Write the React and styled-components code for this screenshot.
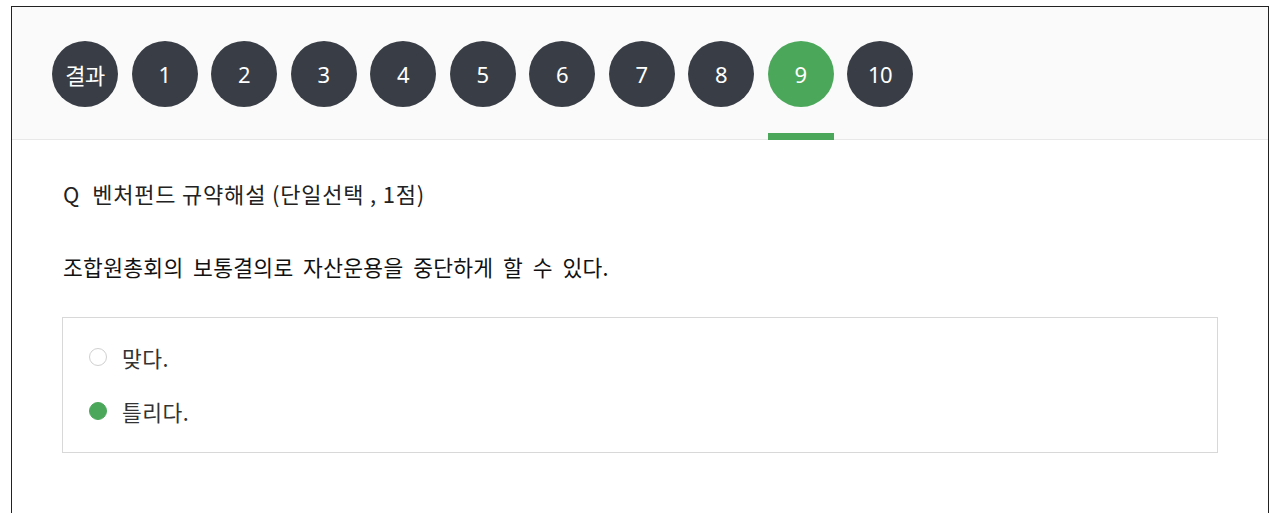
import React, { useState } from 'react';
import styled, { createGlobalStyle } from 'styled-components';

const GlobalStyle = createGlobalStyle`
  body {
    margin: 0;
    background: #fff;
    font-family: "Noto Sans CJK KR", "Noto Sans", sans-serif;
    color: #222;
  }
`

const tabs = ['결과', '1', '2', '3', '4', '5', '6', '7', '8', '9', '10'];

const options = ['맞다.', '틀리다.'];

const App = () => {
  const [current, setCurrent] = useState('9');
  const [answer, setAnswer] = useState(1);

  return (
    <>
      <GlobalStyle />
      <Frame>
        <TabBar>
          {tabs.map((tab) => (
            <TabItem key={tab} $active={tab === current} onClick={() => setCurrent(tab)}>
              <TabCircle $active={tab === current} $word={tab.length > 2}>{tab}</TabCircle>
            </TabItem>
          ))}
        </TabBar>

        <Content>
          <QuestionTitle>
            <span>Q</span>
            <span>벤처펀드 규약해설 (단일선택 , 1점)</span>
          </QuestionTitle>
          <QuestionText>조합원총회의 보통결의로 자산운용을 중단하게 할 수 있다.</QuestionText>

          <OptionBox>
            {options.map((option, i) => (
              <OptionRow key={option} onClick={() => setAnswer(i)}>
                <Radio $checked={answer === i} />
                <OptionLabel>{option}</OptionLabel>
              </OptionRow>
            ))}
          </OptionBox>
        </Content>
      </Frame>
    </>
  )
}

const Frame = styled.div`
  margin: 6px 11px 0;
  min-height: 520px;
  border: 1px solid #222;
  border-bottom: none;
  box-sizing: border-box;
  background: #fff;
`

const TabBar = styled.div`
  display: flex;
  gap: 13.5px;
  padding: 34px 40px 0;
  height: 133px;
  box-sizing: border-box;
  background: #fafafa;
  border-bottom: 1px solid #e8e8e8;
`

const TabItem = styled.div`
  position: relative;
  height: 100%;
  cursor: pointer;

  &::after {
    content: '';
    display: ${(p) => (p.$active ? 'block' : 'none')};
    position: absolute;
    left: 0;
    right: 0;
    bottom: -1px;
    height: 7px;
    background: #4ba85a;
  }
`

const TabCircle = styled.div`
  width: 66px;
  height: 66px;
  border-radius: 50%;
  display: flex;
  align-items: center;
  justify-content: center;
  background: ${(p) => (p.$active ? '#4ba85a' : '#393e46')};
  color: #fff;
  font-family: "Noto Sans", "Noto Sans CJK KR", sans-serif;
  font-size: ${(p) => (p.$word ? '19px' : '22px')};
  font-weight: ${(p) => (p.$word ? 700 : 400)};
  letter-spacing: -0.5px;
`

const Content = styled.div`
  padding: 38px 50px 40px 51px;
`

const QuestionTitle = styled.div`
  display: flex;
  gap: 12px;
  font-size: 22px;
  line-height: 30px;
  letter-spacing: 0.8px;
  color: #222;
`

const QuestionText = styled.div`
  margin-top: 44px;
  font-size: 21.5px;
  line-height: 30px;
  letter-spacing: 0.3px;
  word-spacing: 4.5px;
  color: #111;
`

const OptionBox = styled.div`
  margin-top: 35px;
  margin-left: -1px;
  padding: 21px 26px 23px;
  border: 1px solid #d8d8d8;
  display: flex;
  flex-direction: column;
  gap: 18px;
`

const OptionRow = styled.label`
  display: flex;
  align-items: center;
  gap: 15px;
  height: 36px;
  cursor: pointer;
`

const Radio = styled.span`
  width: 18px;
  height: 18px;
  border-radius: 50%;
  box-sizing: border-box;
  border: 1px solid ${(p) => (p.$checked ? '#4ba85a' : '#d0d0d0')};
  background: ${(p) => (p.$checked ? '#4ba85a' : '#fff')};
  flex: none;
`

const OptionLabel = styled.span`
  font-size: 21.5px;
  letter-spacing: 0.5px;
  color: #333;
`

export default App
